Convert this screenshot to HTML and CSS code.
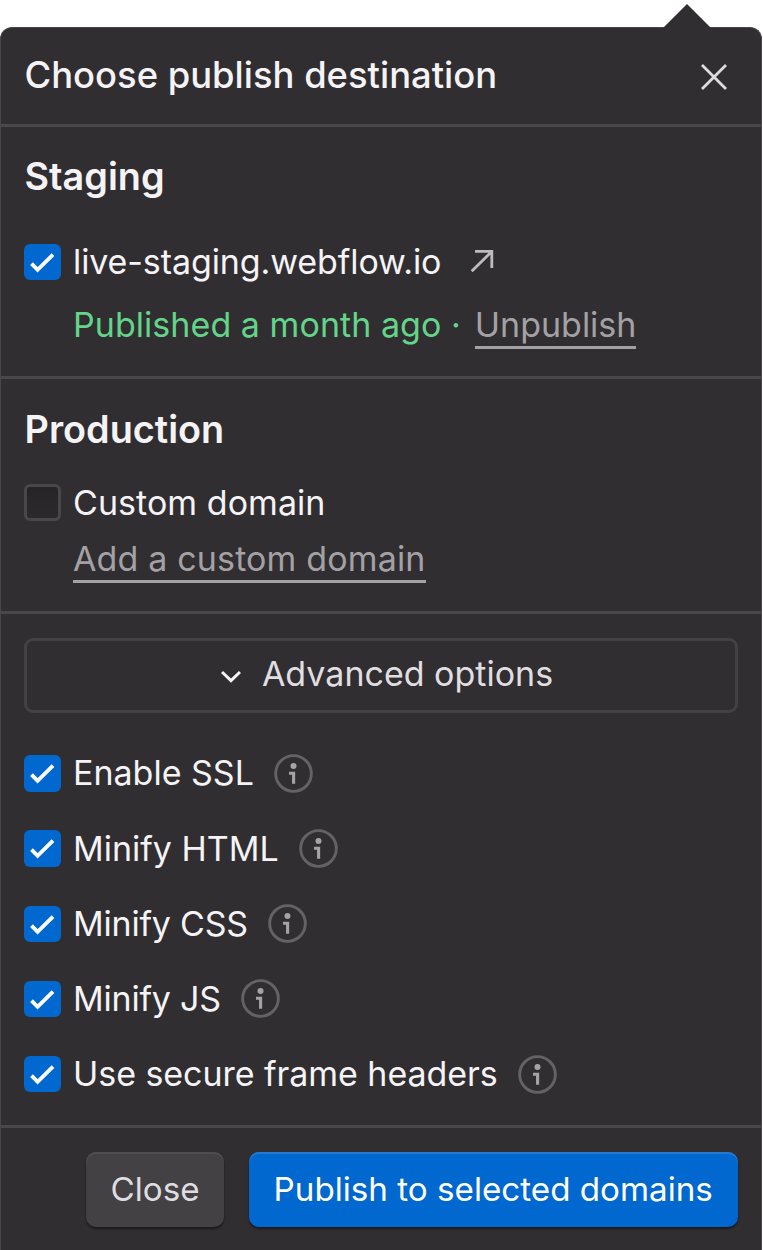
FILE: index.html
```
<!DOCTYPE html>
<html lang="en">
<head>
<meta charset="utf-8">
<title>Choose publish destination</title>
<link rel="stylesheet" href="styles.css">
</head>
<body>
<svg width="0" height="0" class="defs">
  <symbol id="check" viewBox="0 0 36 36"><path d="M7.400 19.300 13.400 25.500 28.600 10.500" fill="none" stroke="#fff" stroke-width="3.8"/></symbol>
  <symbol id="info" viewBox="0 0 40 40"><circle cx="20" cy="20" r="18.300" fill="none" stroke="#646265" stroke-width="3"/><circle cx="20" cy="12.400" r="3.100" fill="#a5a3a6"/><path d="M15.400 18.300H21.700V30.600H18.500V21.400H15.400Z" fill="#a5a3a6"/></symbol>
</svg>
<main class="popover">
  <svg class="arrow" width="50" height="26" viewBox="0 0 50 26"><path d="M0 26 25 1 50 26Z" fill="#302e31"/></svg>
  <header class="header">
    <h1 class="title">Choose publish destination</h1>
    <svg class="close-icon" width="28" height="28" viewBox="0 0 28 28"><path d="M2 2 26 26M26 2 2 26" stroke="#dedcdf" stroke-width="2.8"/></svg>
  </header>
  <section class="section staging">
    <h2 class="heading">Staging</h2>
    <div class="row domain"><svg class="box"><use href="#check"/></svg><span class="label l-domain">live-staging.webflow.io</span>
      <svg class="ext" width="26" height="26" viewBox="0 0 26 26"><path d="M6 2.400H22.800V19M22.800 2.400 2.700 22.300" fill="none" stroke="#bdbbbe" stroke-width="2.8"/></svg></div>
    <div class="row status"><span class="published">Published a month ago</span><span class="dot">·</span><a class="link unpublish">Unpublish</a></div>
  </section>
  <section class="section production">
    <h2 class="heading">Production</h2>
    <div class="row custom"><span class="box empty"></span><span class="label l-custom">Custom domain</span></div>
    <div class="row add"><a class="link add-link">Add a custom domain</a></div>
  </section>
  <section class="section advanced">
    <button class="toggle"><svg width="20" height="14" viewBox="0 0 20 14"><path d="M1 2 10 10.700 19 2" fill="none" stroke="#f5f3f6" stroke-width="3"/></svg><span>Advanced options</span></button>
    <div class="options">
      <div class="row"><svg class="box"><use href="#check"/></svg><span class="label">Enable SSL</span><svg class="info"><use href="#info"/></svg></div>
      <div class="row"><svg class="box"><use href="#check"/></svg><span class="label">Minify HTML</span><svg class="info"><use href="#info"/></svg></div>
      <div class="row"><svg class="box"><use href="#check"/></svg><span class="label l-minify">Minify CSS</span><svg class="info"><use href="#info"/></svg></div>
      <div class="row"><svg class="box"><use href="#check"/></svg><span class="label l-minify">Minify JS</span><svg class="info"><use href="#info"/></svg></div>
      <div class="row"><svg class="box"><use href="#check"/></svg><span class="label l-secure">Use secure frame headers</span><svg class="info"><use href="#info"/></svg></div>
    </div>
  </section>
  <footer class="footer"><button class="btn secondary">Close</button><button class="btn primary">Publish to selected domains</button></footer>
</main>
</body>
</html>
```

FILE: styles.css
```
* { box-sizing: border-box; }
body { margin: 0; background: #fff; padding-top: 27px; height: 1250px; overflow: hidden; font-family: Inter, sans-serif; font-size: 34px; line-height: 48px; color: #f5f3f6; }
.defs { position: absolute; }
.popover { position: relative; width: 762px; height: 1230px; background: #302e31; border: 1px solid #49474a; border-bottom: 0; border-radius: 12px 12px 0 0; }
.arrow { position: absolute; left: 661px; top: -25px; }
.header { height: 99px; padding: 0 33.5px 3px 23.5px; display: flex; align-items: center; justify-content: space-between; border-bottom: 3px solid #49474a; }
.title { margin: 0; font-size: 36.4px; font-weight: 500; white-space: nowrap; }
.close-icon { margin-top: 4px; }
.section { padding: 0 23px; border-bottom: 3px solid #49474a; }
.heading { margin: 0 0 0 0.5px; font-size: 37.8px; font-weight: 600; }
.row { display: flex; align-items: center; height: 48px; white-space: nowrap; }
.box { width: 36.5px; height: 36.5px; margin-right: 12.5px; flex: none; background: #0168d0; border-radius: 6px; }
.empty { background: linear-gradient(#262427, #2b292c); border: 3px solid #49474a; }
.staging { height: 252px; padding-top: 25px; }
.domain { margin-top: 38px; }
.l-domain { letter-spacing: -0.1px; }
.ext { margin-left: 28px; }
.status { margin-top: 15px; padding-left: 49px; }
.published, .dot { color: #63d489; }
.published { letter-spacing: 0.05px; }
.dot { margin: 0 14px 0 9.5px; }
.link { color: #a3a1a4; border-bottom: 3px solid #a3a1a4; height: 48px; }
.production { height: 235px; padding-top: 26px; }
.custom { margin-top: 25.6px; }
.l-custom { letter-spacing: 0.05px; }
.add { margin-top: 8.9px; padding-left: 49px; }
.add-link { letter-spacing: 0.15px; }
.advanced { height: 514px; padding-top: 24px; }
.toggle { width: 714px; height: 75px; padding: 0 0 3px 12px; border: 3px solid #434144; border-radius: 9px; background: none; color: #e0dee1; font: inherit; display: flex; align-items: center; justify-content: center; gap: 21px; }
.toggle svg { margin-top: 6px; }
.options { margin-top: 36.4px; display: flex; flex-direction: column; gap: 27.2px; }
.l-minify { letter-spacing: -0.2px; }
.l-secure { letter-spacing: -0.05px; }
.info { width: 39px; height: 39px; margin-left: 20px; flex: none; }
.footer { padding: 24.4px 23px 0; display: flex; justify-content: flex-end; gap: 24.5px; }
.btn { height: 75px; border: 0; border-radius: 10px; padding: 0 0 2px; font: inherit; font-size: 33.2px; white-space: nowrap; }
.secondary { width: 138px; background: #434144; color: #dfdde0; box-shadow: inset 0 2px #4f4d50, 0 2px 2px #1c1a1d; }
.primary { width: 489.5px; background: #0168d0; color: #fff; box-shadow: inset 0 2px #2379d4, 0 2px 2px #1c1a1d; }
```
